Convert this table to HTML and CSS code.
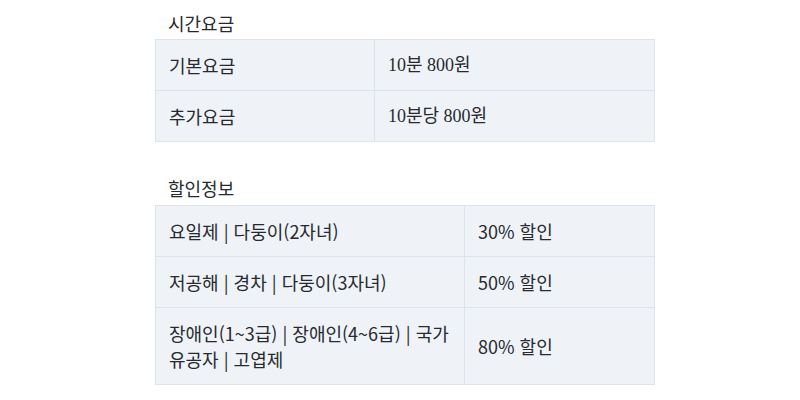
FILE: index.html
```html
<!DOCTYPE html>
<html lang="ko">
<head>
<meta charset="utf-8">
<link rel="stylesheet" href="styles.css">
</head>
<body>
<div class="wrap">
  <section class="block">
    <h3 class="title">시간요금</h3>
    <table class="tbl tbl-time">
      <tr><td class="c1">기본요금</td><td class="c2 serif">10분 800원</td></tr>
      <tr><td class="c1">추가요금</td><td class="c2 serif">10분당 800원</td></tr>
    </table>
  </section>
  <section class="block block-2">
    <h3 class="title">할인정보</h3>
    <table class="tbl tbl-disc">
      <tr><td class="c1">요일제 | 다둥이(2자녀)</td><td class="c2">30% 할인</td></tr>
      <tr><td class="c1">저공해 | 경차 | 다둥이(3자녀)</td><td class="c2">50% 할인</td></tr>
      <tr><td class="c1">장애인(1~3급) | 장애인(4~6급) | 국가유공자 | 고엽제</td><td class="c2">80% 할인</td></tr>
    </table>
  </section>
</div>
</body>
</html>
```

FILE: styles.css
```css
html, body {
  margin: 0;
  padding: 0;
  background: #ffffff;
}
body {
  font-family: "Noto Sans CJK KR", "Noto Sans", sans-serif;
  font-size: 18px;
  color: #262a30;
}
.wrap {
  width: 500px;
  margin: 0 auto;
  padding-left: 10px;
  padding-top: 10px;
}
.block-2 {
  margin-top: 33px;
}
.title {
  margin: 0 0 3px 0;
  padding-left: 13px;
  font-size: 18px;
  font-weight: 400;
  line-height: 26px;
}
.block-2 .title {
  margin-bottom: 4px;
}
.tbl {
  width: 500px;
  border-collapse: collapse;
  background: #eff3f7;
  table-layout: fixed;
}
.tbl td {
  box-sizing: border-box;
  border: 1px solid #dde3ea;
  padding: 12px 12px 12px 13px;
  line-height: 26px;
  vertical-align: middle;
}
.tbl-time .c1 { width: 219px; }
.tbl-disc .c1 { width: 309px; }
.tbl .c2 { padding-left: 13px; }
.serif {
  font-family: "Liberation Serif", "Noto Sans CJK KR", serif;
}
```
